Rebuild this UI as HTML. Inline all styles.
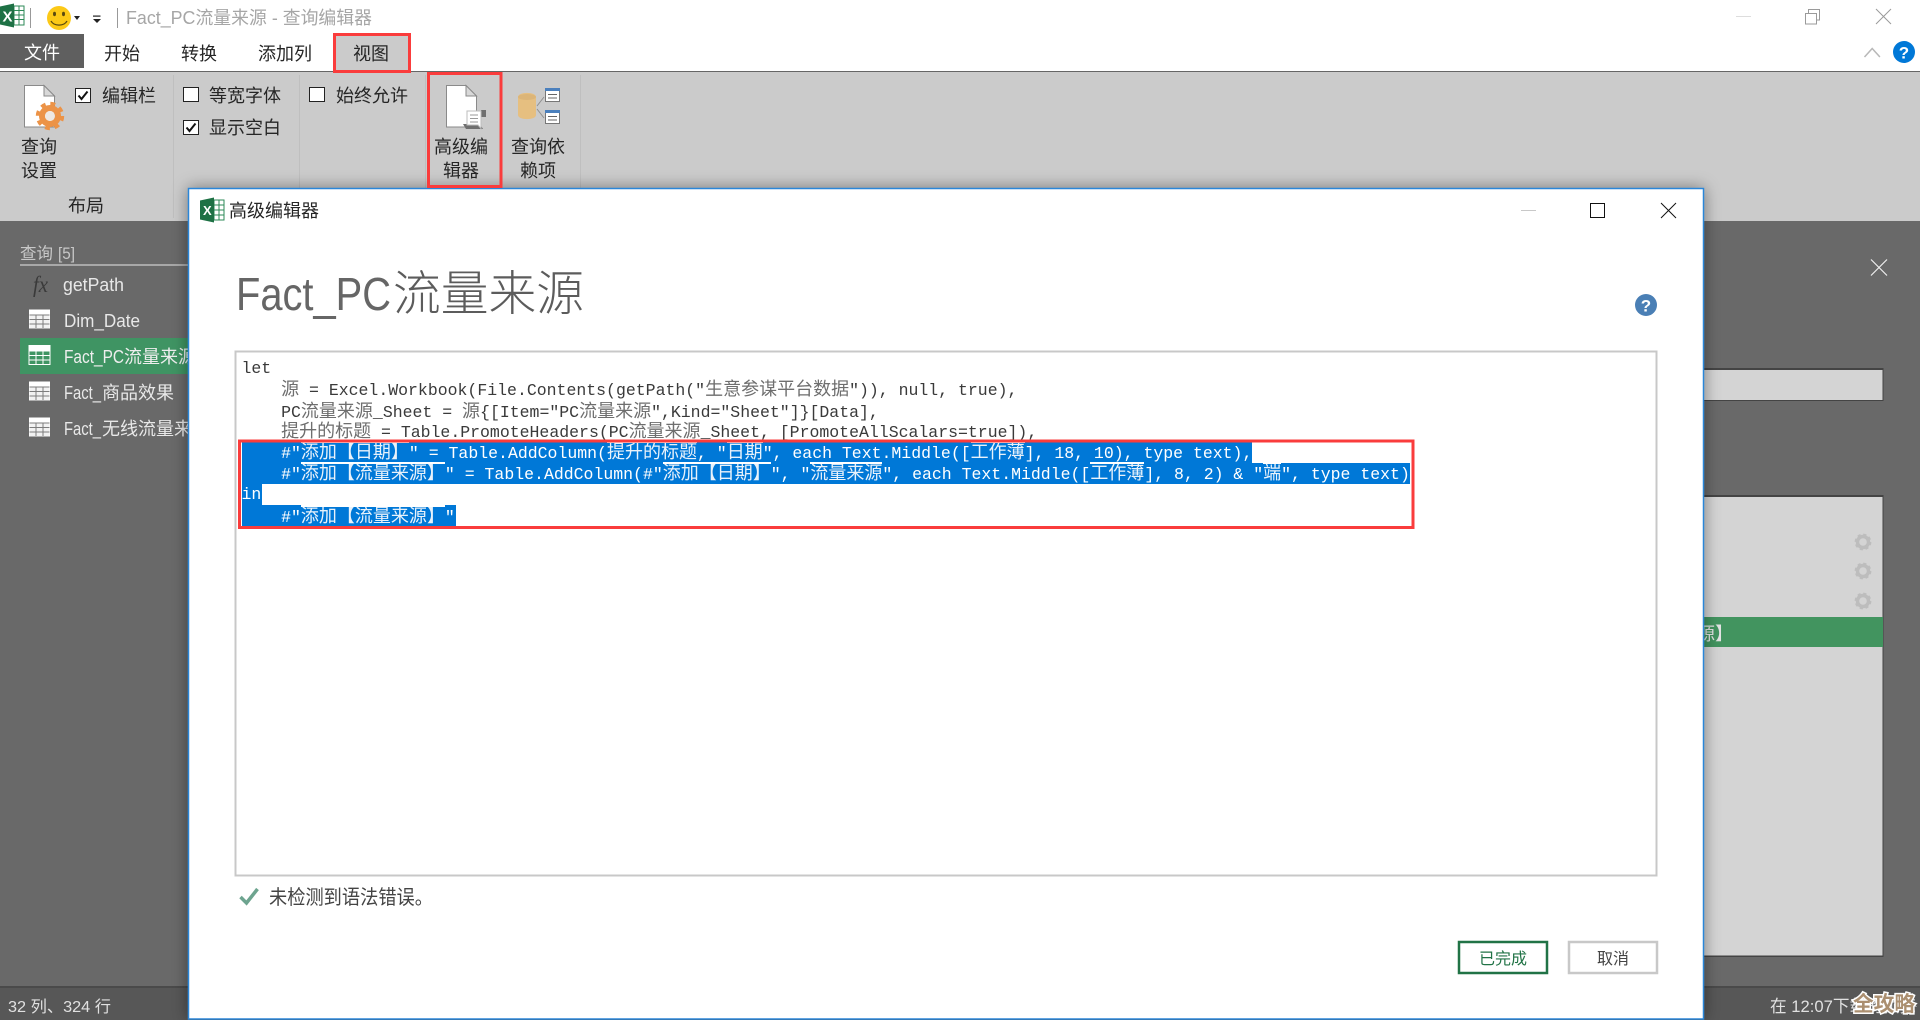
<!DOCTYPE html>
<html lang="zh"><head><meta charset="utf-8"><title>Fact_PC流量来源 - 查询编辑器</title>
<style>
html,body{margin:0;padding:0;width:1920px;height:1020px;overflow:hidden;background:#696969}
svg{position:absolute;left:0;top:0}
svg text{font-family:"Liberation Sans","Noto Sans CJK SC",sans-serif;font-size:18px;fill:#262626}
.code{position:absolute;left:0;top:0;width:1920px;height:1020px}
.sel{position:absolute;left:241.5px;height:21px;background:#0078d7}
.l{position:absolute;left:241.5px;height:21px;line-height:21px;white-space:pre;font-family:"Liberation Mono",monospace;font-size:16.5px;color:#3a3a3a}
.l i{font-style:normal;font-family:"Noto Sans CJK SC",sans-serif;font-size:18px;color:#6e6e6e;position:relative}
.l.w{color:#fff}
.l.w i{color:#e8f2fb}
.l.w i:before{content:"";position:absolute;left:0;right:0;top:3px;height:1.5px;background:#fff}
</style></head><body>
<svg width="1920" height="1020" viewBox="0 0 1920 1020">
<defs>
<filter id="sh" x="-5%" y="-5%" width="110%" height="110%"><feDropShadow dx="0" dy="0" stdDeviation="8" flood-color="#000" flood-opacity=".42"/></filter>
<g id="tb"><rect x=".5" y=".5" width="21" height="19" fill="#fff"/><rect x="1" y="5.5" width="20" height="14" fill="#f2f2f2"/><path d="M1 6h20M1 10.5h20M1 15h20M7.5 6v13M14.5 6v13" stroke="#7d7d7d" stroke-width="1" fill="none"/></g>
<g id="gr"><circle r="5.5" fill="none" stroke="#bdbdbd" stroke-width="3.4"/><circle r="7.2" fill="none" stroke="#bdbdbd" stroke-width="2.4" stroke-dasharray="3.1 2.55"/></g>
</defs>

<!-- top window -->
<rect width="1920" height="71" fill="#fff"/>
<rect x="0" y="71" width="1920" height="1.5" fill="#666"/>
<rect x="0" y="72" width="1920" height="149" fill="#cbcbcb"/>
<rect x="0" y="221" width="1920" height="799" fill="#696969"/>

<!-- excel logo -->
<path d="M14 6h10v19H14z" fill="#fff" stroke="#2c8a57" stroke-width="1"/>
<path d="M14 10.5h10M14 15h10M14 19.5h10M19 6v19" stroke="#2c8a57" stroke-width="1"/>
<path d="M0 6.5 14 3.5v24L0 24.5z" fill="#1e7145"/>
<text x="2.5" y="21.5" style="font-size:15px;font-weight:bold;fill:#fff">X</text>
<rect x="30" y="8" width="1" height="20" fill="#999"/>
<!-- smiley -->
<circle cx="59" cy="18" r="12" fill="#fcc917"/>
<ellipse cx="54.5" cy="14" rx="1.5" ry="2.2" fill="#5a4a10"/><ellipse cx="63.5" cy="14" rx="1.5" ry="2.2" fill="#5a4a10"/>
<path d="M51 21c3 5.5 13 5.5 16 0" fill="none" stroke="#5a4a10" stroke-width="1.3"/>
<path d="M74 16h6l-3 4z" fill="#222"/>
<rect x="93" y="15.5" width="7.5" height="1.2" fill="#222"/><path d="M93 19h8l-4 4z" fill="#222"/>
<rect x="117" y="8" width="1" height="20" fill="#999"/>
<text x="126" y="24" textLength="246" lengthAdjust="spacingAndGlyphs" style="fill:#a6a6a6;font-size:18px">Fact_PC流量来源 - 查询编辑器</text>

<!-- window controls -->
<rect x="1736" y="16" width="15" height="1" fill="#ddd"/>
<path d="M1805.5 13.5h11v10.5h-11zM1808.5 13.5v-4h11v10.500h-3" fill="none" stroke="#9a9a9a" stroke-width="1"/>
<path d="M1876 9l15 15M1891 9l-15 15" stroke="#9a9a9a" stroke-width="1"/>
<path d="M1864.5 57l7.700-8.500 7.700 8.500" fill="none" stroke="#b8b8b8" stroke-width="1.500"/>
<circle cx="1904" cy="52" r="11" fill="#0078d7"/>
<text x="1904" y="58.500" text-anchor="middle" style="font-size:17px;font-weight:bold;fill:#fff">?</text>

<!-- tabs -->
<rect x="0" y="34" width="84" height="34" fill="#5f5f5f"/>
<text x="24" y="59" style="fill:#fff">文件</text>
<text x="104" y="60">开始</text>
<text x="181" y="60">转换</text>
<text x="258" y="60">添加列</text>
<rect x="334.500" y="34.500" width="75" height="37" fill="#cbcbcb" stroke="#fa3c3c" stroke-width="3"/>
<text x="353" y="60">视图</text>

<!-- ribbon separators -->
<path d="M173.500 75v143M299.500 75v143M425.500 75v143M580.500 75v143" stroke="#bfbfbf" stroke-width="1"/>

<!-- query settings icon -->
<path d="M24.500 85.500H44L54.500 96v31h-30z" fill="#fff" stroke="#8a8a8a" stroke-width="1"/>
<path d="M44 85.500V96h10.500z" fill="#d8d8d8" stroke="#8a8a8a" stroke-width="1"/>
<g transform="translate(50 116)"><circle r="8" fill="none" stroke="#ec9347" stroke-width="6"/><circle r="12.200" fill="none" stroke="#ec9347" stroke-width="4" stroke-dasharray="4.800 4.780"/><circle r="5" fill="#eee8e2"/></g>
<text x="21" y="153">查询</text>
<text x="21" y="177">设置</text>
<text x="68" y="212">布局</text>

<!-- checkboxes -->
<rect x="75.500" y="88.500" width="15" height="14" fill="#fff" stroke="#222"/>
<path d="M78.500 95.500l3 3.500 6-7.500" fill="none" stroke="#111" stroke-width="2"/>
<text x="102" y="102">编辑栏</text>
<rect x="183.500" y="87.500" width="15" height="14" fill="#fff" stroke="#222"/>
<text x="209" y="102">等宽字体</text>
<rect x="183.500" y="120.500" width="15" height="14" fill="#fff" stroke="#222"/>
<path d="M186.500 127.500l3 3.500 6-7.500" fill="none" stroke="#111" stroke-width="2"/>
<text x="209" y="134">显示空白</text>
<rect x="309.500" y="87.500" width="15" height="14" fill="#fff" stroke="#222"/>
<text x="336" y="102">始终允许</text>

<!-- advanced editor icon -->
<path d="M446.500 85.500H466L476.500 96v31h-30z" fill="#fff" stroke="#8a8a8a" stroke-width="1"/>
<path d="M466 85.500V96h10.500z" fill="#d8d8d8" stroke="#8a8a8a" stroke-width="1"/>
<path d="M463 124h17l3 5h-17zM481 110h5v7h-5z" fill="#6f6f6f"/>
<path d="M467 111h14v17.500l-3-3.500h-11z" fill="#fff" stroke="#bdbdbd" stroke-width="1"/>
<path d="M470 115h8M470 118.500h8M470 122h8" stroke="#9a9a9a" stroke-width="1"/>
<text x="434" y="153">高级编</text>
<text x="443" y="177">辑器</text>

<!-- query dependencies icon -->
<path d="M518 97c0-5.500 18-5.500 18 0v18c0 5.500-18 5.500-18 0z" fill="#e6bf80"/>
<ellipse cx="527" cy="97" rx="9" ry="3" fill="#dcb578"/>
<path d="M537 106l7-9M537 109l7 9" stroke="#8f8f8f" stroke-width="1"/>
<rect x="545.500" y="88.500" width="14" height="13" fill="#fff" stroke="#777"/><rect x="545" y="88" width="15" height="3" fill="#4b80bd"/>
<path d="M548 94.500h9M548 98h9" stroke="#666"/>
<rect x="545.500" y="110.500" width="14" height="13" fill="#fff" stroke="#777"/><rect x="545" y="110" width="15" height="3" fill="#4b80bd"/>
<path d="M548 116.500h9M548 120h9" stroke="#666"/>
<text x="511" y="153">查询依</text>
<text x="520" y="177">赖项</text>

<!-- sidebar -->
<text x="20" y="259" style="font-size:16.500px;fill:#c8c8c8">查询</text>
<text x="58" y="259" textLength="17" lengthAdjust="spacingAndGlyphs" style="font-size:16.500px;fill:#c8c8c8">[5]</text>
<rect x="20" y="264" width="170" height="2" fill="#a8a8a8"/>
<rect x="20" y="338" width="172" height="36" fill="#3f9463"/>
<text x="33" y="292" textLength="15" lengthAdjust="spacingAndGlyphs" style="font-family:'Liberation Serif',serif;font-style:italic;font-size:23px;fill:#3a3a3a">fx</text>
<text x="63" y="291" textLength="61" lengthAdjust="spacingAndGlyphs" style="fill:#e8e8e8">getPath</text>
<use href="#tb" x="28.500" y="309"/>
<text x="64" y="327" textLength="76" lengthAdjust="spacingAndGlyphs" style="fill:#e8e8e8">Dim_Date</text>
<g transform="translate(28.500 345)"><rect x=".5" y=".5" width="21" height="19" fill="#3f9463" stroke="#fff"/><rect x="1" y="1" width="20" height="4.500" fill="#fff"/><path d="M1 6h20M1 10.500h20M1 15h20M7.500 6v13M14.500 6v13" stroke="#fff" fill="none"/></g>
<text x="64" y="363" textLength="60" lengthAdjust="spacingAndGlyphs" style="fill:#eee">Fact_PC</text>
<text x="124" y="363" style="fill:#eee">流量来源</text>
<use href="#tb" x="28.500" y="381"/>
<text x="64" y="399" textLength="37" lengthAdjust="spacingAndGlyphs" style="fill:#e8e8e8">Fact_</text>
<text x="102" y="399" style="fill:#e8e8e8">商品效果</text>
<use href="#tb" x="28.500" y="417"/>
<text x="64" y="435" textLength="37" lengthAdjust="spacingAndGlyphs" style="fill:#e8e8e8">Fact_</text>
<text x="102" y="435" style="fill:#e8e8e8">无线流量来源</text>

<!-- right side -->
<path d="M1871 259.500l16 16M1887 259.500l-16 16" stroke="#f0f0f0" stroke-width="1.200"/>
<rect x="1650" y="368" width="233.500" height="33" fill="#444"/>
<rect x="1650" y="370" width="232.500" height="30" fill="#d4d4d4"/>
<rect x="1650" y="495" width="233.500" height="462" fill="#444"/>
<rect x="1650" y="497" width="232.500" height="458.500" fill="#d4d4d4"/>
<use href="#gr" x="1863" y="542"/><use href="#gr" x="1863" y="571"/><use href="#gr" x="1863" y="601"/>
<rect x="1650" y="617" width="233" height="30" fill="#42945f"/>
<text x="1697" y="640" style="fill:#e4e4e4">源】</text>

<!-- status bar -->
<rect x="0" y="986" width="1920" height="2" fill="#4a4a4a"/>
<rect x="0" y="988" width="1920" height="32" fill="#575757"/>
<text x="8" y="1012" textLength="103" lengthAdjust="spacingAndGlyphs" style="font-size:16px;fill:#e0e0e0">32 列、324 行</text>
<text x="1770" y="1012" textLength="146" lengthAdjust="spacingAndGlyphs" style="font-size:17px;fill:#e0e0e0">在 12:07下载的预览</text>
<text x="1853" y="1011" textLength="62" lengthAdjust="spacingAndGlyphs" style="font-size:21px;font-weight:bold;fill:#ab8f70;stroke:#fff;stroke-width:3px;paint-order:stroke">全攻略</text>

<!-- dialog -->
<rect x="188.500" y="188.500" width="1515" height="830.500" fill="#fff" stroke="#2a86d8" stroke-width="1.500" filter="url(#sh)"/>
<rect x="428.500" y="73.500" width="72.500" height="113" fill="none" stroke="#fa3c3c" stroke-width="3"/>

<path d="M214 200h10v20h-10z" fill="#fff" stroke="#2c8a57"/>
<path d="M214 205h10M214 210h10M214 215h10M219 200v20" stroke="#2c8a57"/>
<path d="M200 200.500 214 197.500v25l-14-3z" fill="#1e7145"/>
<text x="203" y="215" style="font-size:13px;font-weight:bold;fill:#fff">X</text>
<text x="229" y="217">高级编辑器</text>

<rect x="1521" y="210" width="15" height="1" fill="#c8c8c8"/>
<rect x="1590.500" y="203.500" width="14" height="14" fill="none" stroke="#111" stroke-width="1"/>
<path d="M1661 203l15 15M1676 203l-15 15" stroke="#111" stroke-width="1"/>

<text x="236" y="310" textLength="155" lengthAdjust="spacingAndGlyphs" style="font-size:46px;fill:#666">Fact_PC</text>
<text x="393" y="310" textLength="191" lengthAdjust="spacingAndGlyphs" style="font-size:48px;font-weight:300;fill:#5c5c5c">流量来源</text>

<circle cx="1646" cy="305" r="11" fill="#4a7fb5"/>
<text x="1646" y="311.500" text-anchor="middle" style="font-size:17px;font-weight:bold;fill:#fff">?</text>

<rect x="235.500" y="351.500" width="1421" height="524" fill="#fff" stroke="#c8c8c8" stroke-width="2"/>

<path d="M240.500 897l6 6 11-14" fill="none" stroke="#6da48f" stroke-width="3.500"/>
<text x="269" y="904" textLength="164" lengthAdjust="spacingAndGlyphs" style="font-size:20px;fill:#444">未检测到语法错误。</text>

<rect x="1459" y="942" width="88" height="31" fill="#fff" stroke="#217346" stroke-width="2.500"/>
<text x="1503" y="964" text-anchor="middle" style="font-size:16px;fill:#217346">已完成</text>
<rect x="1569" y="942" width="88" height="31" fill="#fff" stroke="#c8c8c8" stroke-width="2.500"/>
<text x="1613" y="964" text-anchor="middle" style="font-size:16px;fill:#444">取消</text>
</svg>

<div class="code">
<div class="sel" style="top:442px;width:1010px"></div>
<div class="sel" style="top:463px;width:1168px"></div>
<div class="sel" style="top:484px;width:20px"></div>
<div class="sel" style="top:505px;width:214px"></div>
<div class="l" style="top:358px">let</div>
<div class="l" style="top:378px">    <i>源</i> = Excel.Workbook(File.Contents(getPath("<i>生意参谋平台数据</i>")), null, true),</div>
<div class="l" style="top:400px">    PC<i>流量来源</i>_Sheet = <i>源</i>{[Item="PC<i>流量来源</i>",Kind="Sheet"]}[Data],</div>
<div class="l" style="top:420px">    <i>提升的标题</i> = Table.PromoteHeaders(PC<i>流量来源</i>_Sheet, [PromoteAllScalars=true]),</div>
<div class="l w" style="top:441px">    #"<i>添加【日期】</i>" = Table.AddColumn(<i>提升的标题</i>, "<i>日期</i>", each Text.Middle([<i>工作薄</i>], 18, 10), type text),</div>
<div class="l w" style="top:462px">    #"<i>添加【流量来源】</i>" = Table.AddColumn(#"<i>添加【日期】</i>", "<i>流量来源</i>", each Text.Middle([<i>工作薄</i>], 8, 2) &amp; "<i>端</i>", type text)</div>
<div class="l w" style="top:484px">in</div>
<div class="l w" style="top:505px">    #"<i>添加【流量来源】</i>"</div>
</div>

<svg width="1920" height="1020" viewBox="0 0 1920 1020" style="pointer-events:none">
<rect x="239.500" y="441" width="1173.500" height="86.500" fill="none" stroke="#fa3c3c" stroke-width="3"/>
</svg>
</body></html>
